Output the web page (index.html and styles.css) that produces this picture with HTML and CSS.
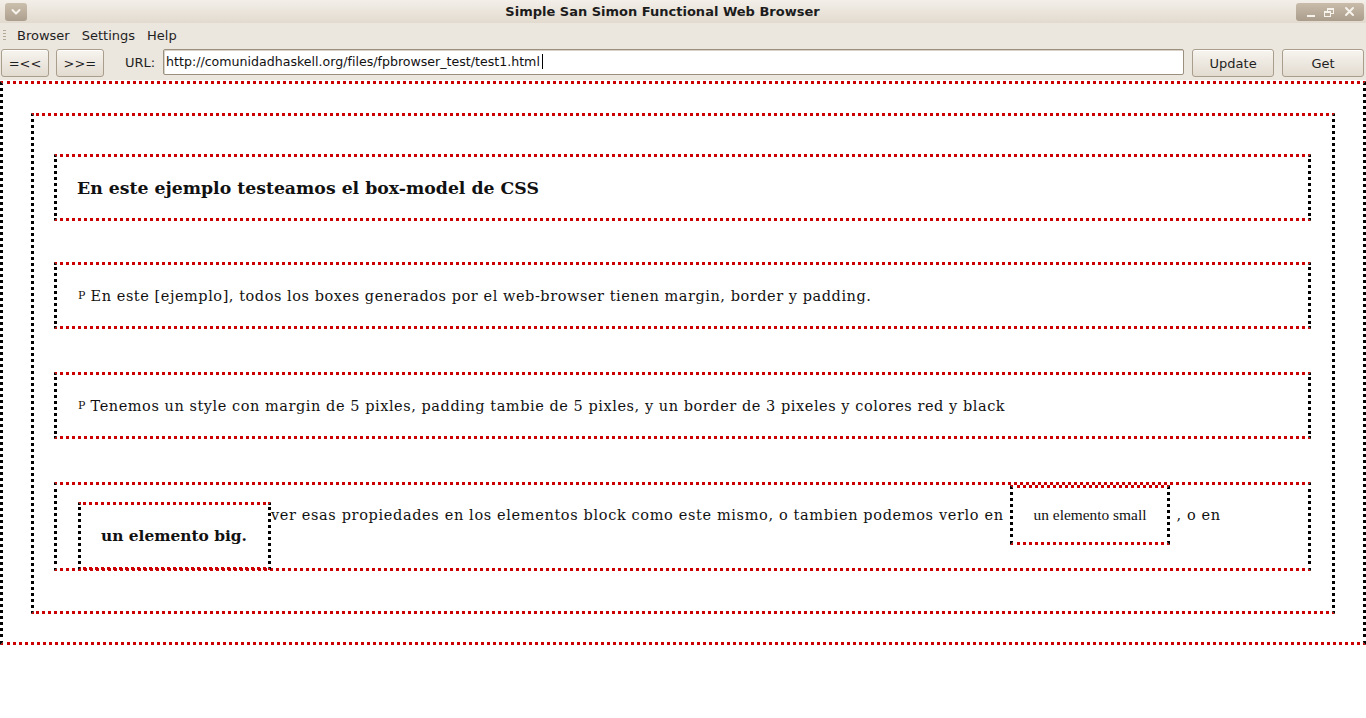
FILE: index.html
```html
<!DOCTYPE html>
<html lang="es">
<head>
<meta charset="utf-8">
<title>Simple San Simon Functional Web Browser</title>
<link rel="stylesheet" href="styles.css">
</head>
<body>
<div class="window">
  <header class="titlebar">
    <div class="menu-btn">
      <svg width="22" height="18" viewBox="0 0 22 18"><path d="M7.5 7 L11 10.5 L14.5 7" fill="none" stroke="#f6f2ec" stroke-width="2" stroke-linecap="round" stroke-linejoin="round"/></svg>
    </div>
    <div class="title">Simple San Simon Functional Web Browser</div>
    <div class="win-ctrls">
      <svg width="68" height="18" viewBox="0 0 68 18">
        <rect x="11" y="12" width="8" height="2" fill="#f6f2ec"/>
        <rect x="31.5" y="5.5" width="6" height="5" fill="none" stroke="#f6f2ec" stroke-width="1"/>
        <rect x="31.5" y="5.5" width="6" height="1.5" fill="#f6f2ec"/>
        <rect x="28.5" y="8.5" width="6" height="5" fill="#b9ab99" stroke="#f6f2ec" stroke-width="1"/>
        <rect x="28.5" y="8.5" width="6" height="1.5" fill="#f6f2ec"/>
        <path d="M50 5 L57 12 M57 5 L50 12" stroke="#f6f2ec" stroke-width="2" stroke-linecap="round"/>
      </svg>
    </div>
  </header>
  <nav class="menubar">
    <span class="grip"></span>
    <span class="menu-item">Browser</span>
    <span class="menu-item">Settings</span>
    <span class="menu-item">Help</span>
  </nav>
  <div class="toolbar">
    <button class="btn nav-btn">=&lt;&lt;</button>
    <button class="btn nav-btn">&gt;&gt;=</button>
    <label class="url-label">URL:</label>
    <div class="url-input">http://comunidadhaskell.org/files/fpbrowser_test/test1.html<span class="caret"></span></div>
    <button class="btn act-btn">Update</button>
    <button class="btn act-btn">Get</button>
  </div>
  <main class="viewport">
    <div class="box outer">
      <div class="box body">
        <div class="box block heading">En este ejemplo testeamos el box-model de CSS</div>
        <div class="box block para"><span class="tag">P</span>&nbsp;En este [ejemplo], todos los boxes generados por el web-browser tienen margin, border y padding.</div>
        <div class="box block para"><span class="tag">P</span>&nbsp;Tenemos un style con margin de 5 pixles, padding tambie de 5 pixles, y un border de 3 pixeles y colores red y black</div>
        <div class="box mixed">
          <span class="box big">un elemento big.</span>
          <span class="run">ver esas propiedades en los elementos block como este mismo, o tambien podemos verlo en</span>
          <span class="box small">un elemento small</span>
          <span class="run tail">, o en</span>
        </div>
      </div>
    </div>
  </main>
</div>
</body>
</html>
```
FILE: styles.css
```css
html, body {
  margin: 0;
  padding: 0;
  background: #ffffff;
}

.window {
  width: 1366px;
  height: 718px;
  background: #ffffff;
  font-family: "DejaVu Sans", sans-serif;
  font-size: 13px;
  color: #1a1a1a;
}

.titlebar {
  height: 23px;
  display: flex;
  align-items: center;
  justify-content: space-between;
  padding: 0 2px 0 5px;
  box-sizing: border-box;
  background: linear-gradient(#f3efe9, #e2dace);
}

.menu-btn {
  width: 22px;
  height: 18px;
  border-radius: 3px;
  background: linear-gradient(#cbbfae, #ad9f8d);
  display: flex;
}

.title {
  font-weight: bold;
  font-size: 13px;
  color: #1c1c1c;
  padding-left: 2px;
}

.win-ctrls {
  width: 68px;
  height: 18px;
  border-radius: 3px;
  background: linear-gradient(#c9bcab, #ab9d8b);
  display: flex;
}

.menubar {
  height: 24px;
  display: flex;
  align-items: center;
  background: #ebe6de;
  box-sizing: border-box;
  padding-left: 3px;
}

.grip {
  width: 3px;
  height: 10px;
  margin-right: 11px;
  background: repeating-linear-gradient(#b3a999 0 1px, transparent 1px 3px);
}

.menu-item {
  margin-right: 12px;
  color: #1f1f1f;
}

.toolbar {
  height: 33px;
  display: flex;
  align-items: flex-start;
  padding: 2px 2px 0 1px;
  box-sizing: border-box;
  background: #ebe6de;
}

.btn {
  font-family: "DejaVu Sans", sans-serif;
  font-size: 13px;
  color: #1f1f1f;
  height: 28px;
  border: 1px solid #a99d8b;
  border-radius: 3px;
  background: linear-gradient(#f7f4ef, #e2dbd0);
  padding: 0;
  box-shadow: inset 0 1px 0 #ffffff;
}

.nav-btn {
  width: 48px;
  margin-right: 7px;
}

.url-label {
  margin: 6px 8px 0 14px;
  color: #1f1f1f;
}

.url-input {
  width: 1022px;
  height: 26px;
  box-sizing: border-box;
  border: 1px solid #9b8f7e;
  border-radius: 2px;
  background: #ffffff;
  padding: 4px 0 0 2px;
  font-size: 12.6px;
  color: #111111;
  box-shadow: inset 1px 1px 0 #d8d2c8;
}

.caret {
  display: inline-block;
  width: 1px;
  height: 15px;
  background: #000;
  vertical-align: -3px;
  margin-left: 2px;
}

.act-btn {
  width: 82px;
  margin-left: 8px;
}

.viewport {
  padding-top: 1px;
}

.box {
  box-sizing: border-box;
  border-style: dotted;
  border-width: 3px;
  border-top-color: #cc0000;
  border-bottom-color: #cc0000;
  border-left-color: #000000;
  border-right-color: #000000;
}

.outer {
  width: 1366px;
  padding: 29px 28px 28px 28px;
}

.body {
  display: flex;
  flex-direction: column;
  gap: 43px;
  padding: 38px 21px 40px 20px;
}

.block {
  height: 67px;
  display: flex;
  align-items: center;
  font-family: "DejaVu Serif", serif;
  color: #111;
}

.heading {
  padding-left: 20px;
  font-size: 17.3px;
  font-weight: bold;
  margin-bottom: -2px;
}

.para {
  padding-left: 21px;
  font-size: 14.5px;
  letter-spacing: 0.55px;
}

.tag {
  font-size: 11px;
  letter-spacing: 0;
}

.mixed {
  height: 89px;
  display: flex;
  align-items: flex-start;
  padding-left: 21px;
  font-family: "DejaVu Serif", serif;
  font-size: 14.5px;
  letter-spacing: 0.64px;
  color: #111;
}

.big {
  height: 68px;
  margin-top: 17px;
  padding: 0 21px 0 20px;
  display: flex;
  align-items: center;
  font-size: 15.4px;
  letter-spacing: 0;
  font-weight: bold;
  white-space: nowrap;
}

.run {
  margin-top: 20px;
  line-height: 20px;
  white-space: nowrap;
}

.small {
  height: 60px;
  margin-left: 6px;
  padding: 0 21px 0 21px;
  display: flex;
  align-items: center;
  font-family: "Liberation Serif", serif;
  font-size: 15.4px;
  letter-spacing: 0;
  white-space: nowrap;
}

.tail {
  margin-left: 6px;
}
```
